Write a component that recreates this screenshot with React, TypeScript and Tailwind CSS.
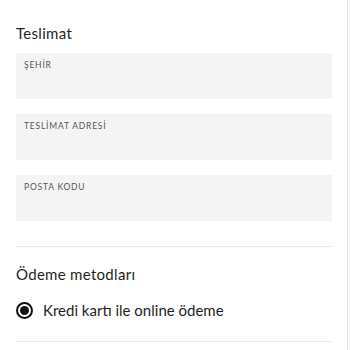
export default function App() {
  const fields = ["ŞEHİR", "TESLİMAT ADRESİ", "POSTA KODU"];

  return (
    <div className="h-[350px] w-[350px] overflow-hidden bg-white font-['Lato',sans-serif] text-[#1f1f1f]">
      <div className="mr-[2px] h-full border-r border-[#e6e6e6] pl-4 pr-[15px]">
        <h2 className="pt-[24px] text-[15px] leading-[18px] tracking-[0.3px]">Teslimat</h2>

        <div className="mt-[11px] flex flex-col gap-[15px]">
          {fields.map((f) => (
            <div key={f} className="h-[46px] bg-[#f4f4f4] px-2 pt-[8px]">
              <span className="block text-[8.5px] leading-none tracking-[0.8px] text-[#555]">{f}</span>
            </div>
          ))}
        </div>

        <div className="mt-[25px] border-t border-[#e8e8e8]" />

        <h2 className="mt-[18px] text-[15px] leading-[18px] tracking-[0.3px]">Ödeme metodları</h2>

        <label className="mt-[16px] flex h-[22px] items-center gap-[10px]">
          <span className="flex h-[17px] w-[17px] items-center justify-center rounded-full border-[2px] border-[#111]">
            <span className="h-[9px] w-[9px] rounded-full bg-[#111]" />
          </span>
          <span className="text-[15px]">Kredi kartı ile online ödeme</span>
        </label>

        <div className="mt-[20px] border-t border-[#e8e8e8]" />
      </div>
    </div>
  );
}
